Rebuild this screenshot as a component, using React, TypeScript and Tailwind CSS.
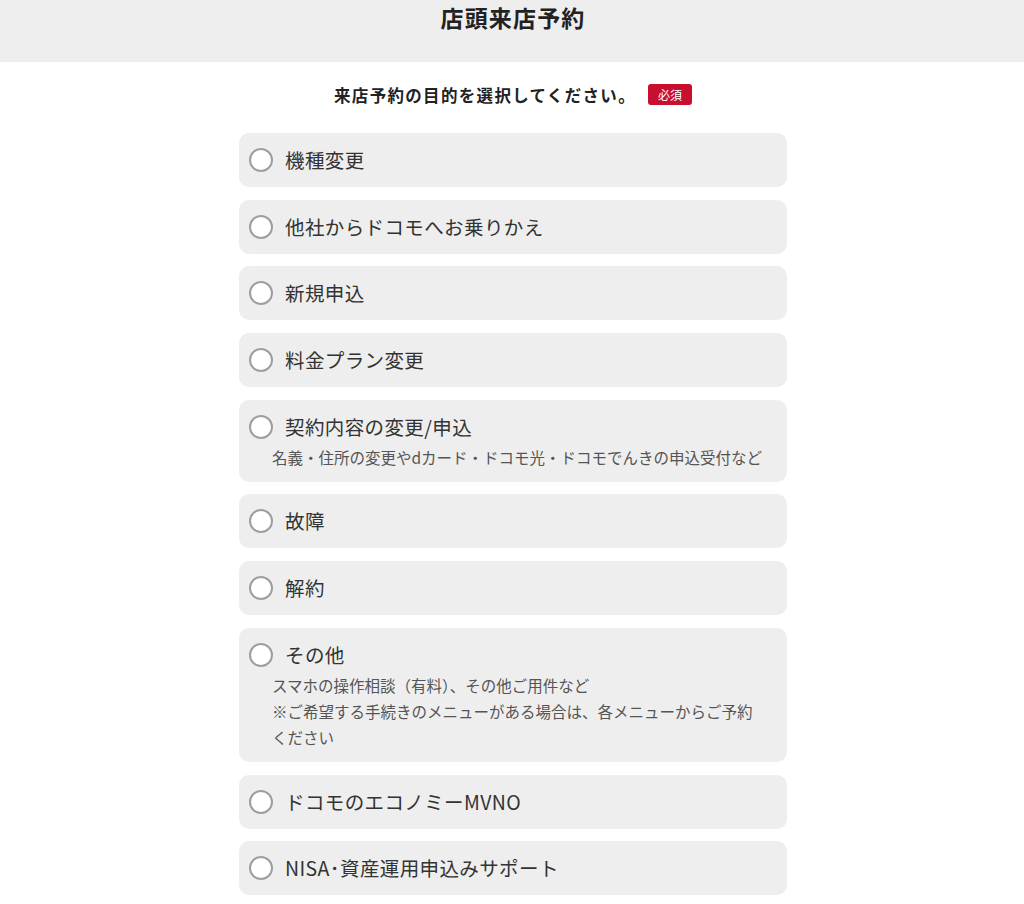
const options: { label: string; notes?: string[] }[] = [
  { label: "機種変更" },
  { label: "他社からドコモへお乗りかえ" },
  { label: "新規申込" },
  { label: "料金プラン変更" },
  {
    label: "契約内容の変更/申込",
    notes: ["名義・住所の変更やdカード・ドコモ光・ドコモでんきの申込受付など"],
  },
  { label: "故障" },
  { label: "解約" },
  {
    label: "その他",
    notes: [
      "スマホの操作相談（有料）、その他ご用件など",
      "※ご希望する手続きのメニューがある場合は、各メニューからご予約",
      "ください",
    ],
  },
  { label: "ドコモのエコノミーMVNO" },
  { label: "NISA･資産運用申込みサポート" },
];

const App = () => {
  return (
    <div className="min-h-[904px] bg-white font-['Noto_Sans_CJK_JP','Noto_Sans',sans-serif] text-[#333]">
      <header className="h-[62px] bg-[#eeeeee] pt-[1px] pl-[2px] text-center">
        <h1 className="text-[23px] font-bold leading-[32px] tracking-[0.05em] text-[#222]">
          店頭来店予約
        </h1>
      </header>

      <div className="flex justify-center pl-[2px]">
        <div className="w-[548px] pt-[19px]">
          <div className="flex items-center justify-center gap-[12px]">
            <p className="text-[16.5px] font-bold leading-[28px] tracking-[0.08em] text-[#222]">
              来店予約の目的を選択してください。
            </p>
            <span className="-mt-[1px] flex h-[21px] w-[44px] items-center justify-center rounded-[3px] bg-[#c8102e] text-[12px] text-white">
              必須
            </span>
          </div>

          <ul className="mt-[24px] flex flex-col gap-[12.7px]">
            {options.map((opt) => (
              <li key={opt.label}>
                <label className="block cursor-pointer rounded-[10px] bg-[#eeeeee] pl-[10px] pr-[24px] pt-[15px] pb-[15px]">
                  <div className="flex h-[24px] items-center gap-[12px]">
                    <span className="h-[24px] w-[24px] shrink-0 rounded-full border-2 border-[#9e9e9e] bg-white" />
                    <span className="text-[19.5px] leading-[24px] tracking-[0.02em]">
                      {opt.label}
                    </span>
                  </div>
                  {opt.notes && (
                    <div className="mt-[5px] -mb-[3px] pl-[23px] text-[15.5px] leading-[26px] text-[#555]">
                      {opt.notes.map((n) => (
                        <p key={n} className="whitespace-nowrap">{n}</p>
                      ))}
                    </div>
                  )}
                </label>
              </li>
            ))}
          </ul>
        </div>
      </div>
    </div>
  );
};

export default App;
